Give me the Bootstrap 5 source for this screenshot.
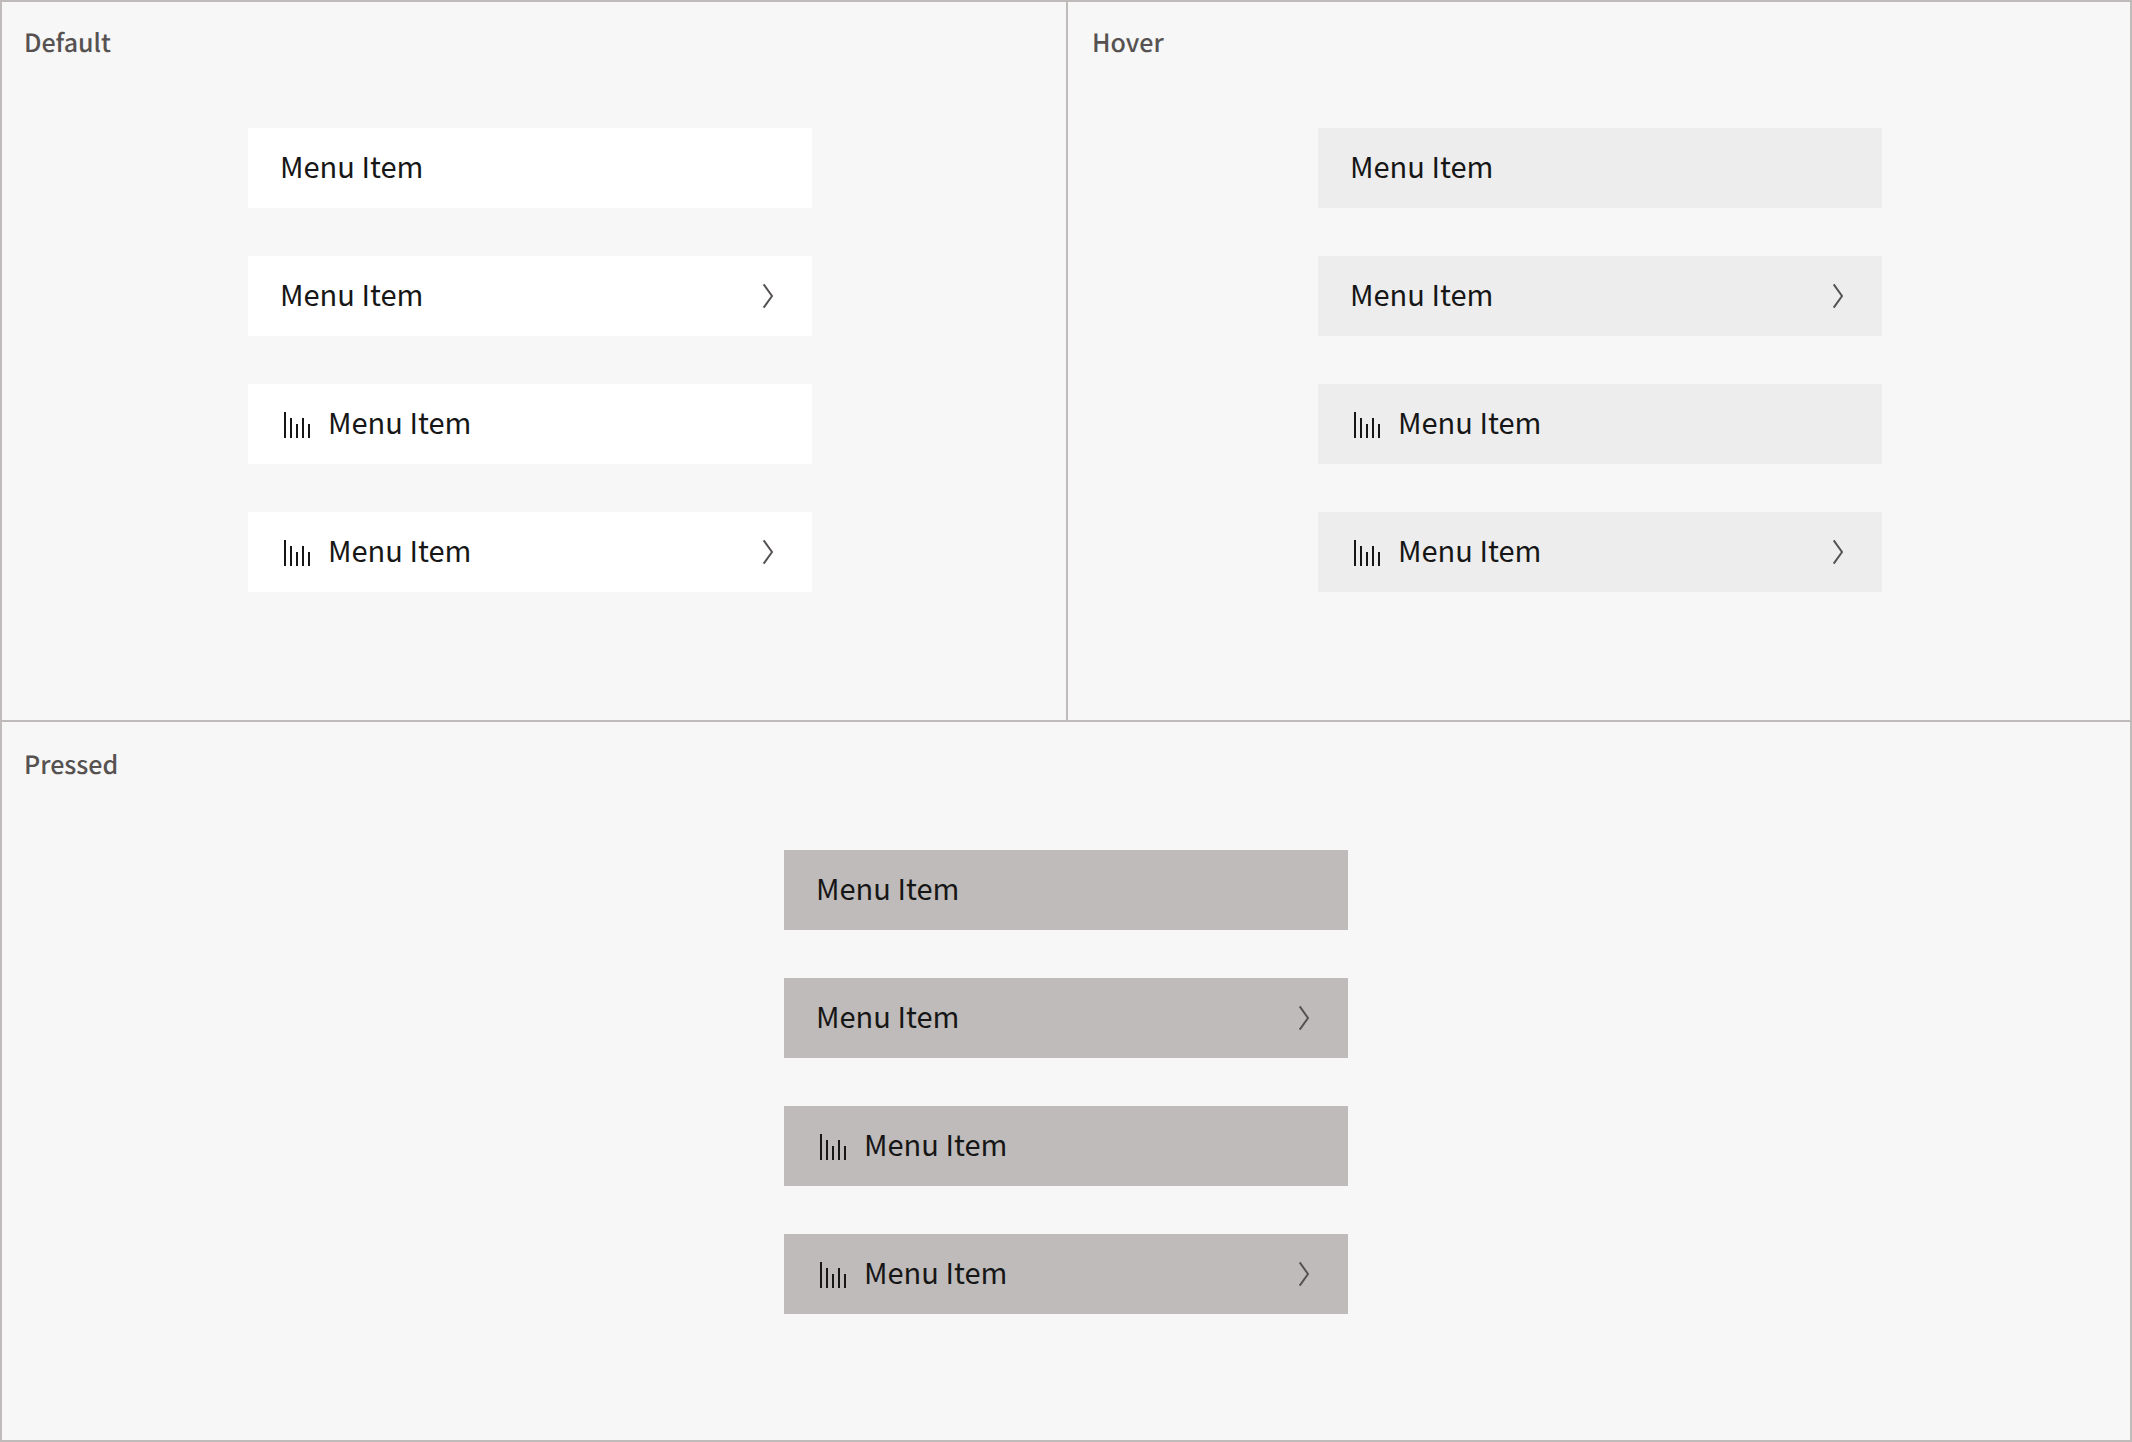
<!DOCTYPE html>
<html lang="en">
<head>
<meta charset="utf-8">
<meta name="viewport" content="width=device-width, initial-scale=1">
<title>Menu Item states</title>
<link href="https://cdn.jsdelivr.net/npm/bootstrap@5.3.0/dist/css/bootstrap.min.css" rel="stylesheet">
<style>
  :root { --line: #bfbbba; --label: #565251; --ink: #161616; }
  body { background: #f7f7f7; color: var(--ink); font-family: "Noto Sans CJK SC", "Noto Sans", sans-serif; text-rendering: geometricPrecision; }
  .board { border: 2px solid var(--line); }
  .board-half { flex: 1 1 0; }
  .board-half + .board-half { border-top: 2px solid var(--line); }
  .panel { padding: 20px 22px 48px; }
  .panel + .panel { border-left: 2px solid var(--line); padding-left: 24px; }
  .panel-wide { padding-top: 22px; }
  .panel-label { color: var(--label); font-size: 25px; line-height: 40px; font-weight: 500; margin-bottom: 66px; }
  .menu-stack { width: 564px; max-width: 100%; gap: 48px; }
  .menu-entry { height: 80px; padding: 0 32px; gap: 16px; border: 0; background: #fff; color: var(--ink); font-size: 29px; line-height: 40px; }
  .menu-entry span { padding-bottom: 6px; }
  .is-hover .menu-entry, .menu-entry:hover { background: #ededed; }
  .is-pressed .menu-entry, .menu-entry:active { background: #bfbbba; }
  .glyph { width: 32px; height: 32px; flex: none; }
  .chevron { fill: none; stroke: var(--label); stroke-width: 2; }
</style>
<script src="https://cdn.jsdelivr.net/npm/bootstrap@5.3.0/dist/js/bootstrap.bundle.min.js" defer></script>
</head>
<body>
<svg class="d-none" aria-hidden="true">
  <symbol id="bars" viewBox="0 0 32 32"><path fill="#161616" d="M4 4h2v26H4zM10 10h2v20h-2zM16 16h2v14h-2zM22 10h2v20h-2zM28 16h2v14h-2z"/></symbol>
  <symbol id="chevron" viewBox="0 0 32 32"><path d="M15.700 4.400 24 16l-8.300 11.600"/></symbol>
</svg>
<main class="board min-vh-100 d-flex flex-column">
  <div class="board-half d-flex">
    <section class="panel w-50">
      <h2 class="panel-label">Default</h2>
      <div class="pe-2">
        <div class="menu-stack d-flex flex-column mx-auto">
          <button type="button" class="menu-entry d-flex align-items-center text-start"><span>Menu Item</span></button>
          <button type="button" class="menu-entry d-flex align-items-center text-start"><span>Menu Item</span><svg class="glyph chevron ms-auto" aria-hidden="true"><use href="#chevron"/></svg></button>
          <button type="button" class="menu-entry d-flex align-items-center text-start"><svg class="glyph" aria-hidden="true"><use href="#bars"/></svg><span>Menu Item</span></button>
          <button type="button" class="menu-entry d-flex align-items-center text-start"><svg class="glyph" aria-hidden="true"><use href="#bars"/></svg><span>Menu Item</span><svg class="glyph chevron ms-auto" aria-hidden="true"><use href="#chevron"/></svg></button>
        </div>
      </div>
    </section>
    <section class="panel w-50 is-hover">
      <h2 class="panel-label">Hover</h2>
      <div class="menu-stack d-flex flex-column mx-auto">
        <button type="button" class="menu-entry d-flex align-items-center text-start"><span>Menu Item</span></button>
        <button type="button" class="menu-entry d-flex align-items-center text-start"><span>Menu Item</span><svg class="glyph chevron ms-auto" aria-hidden="true"><use href="#chevron"/></svg></button>
        <button type="button" class="menu-entry d-flex align-items-center text-start"><svg class="glyph" aria-hidden="true"><use href="#bars"/></svg><span>Menu Item</span></button>
        <button type="button" class="menu-entry d-flex align-items-center text-start"><svg class="glyph" aria-hidden="true"><use href="#bars"/></svg><span>Menu Item</span><svg class="glyph chevron ms-auto" aria-hidden="true"><use href="#chevron"/></svg></button>
      </div>
    </section>
  </div>
  <div class="board-half d-flex">
    <section class="panel panel-wide w-100 is-pressed">
      <h2 class="panel-label">Pressed</h2>
      <div class="menu-stack d-flex flex-column mx-auto">
        <button type="button" class="menu-entry d-flex align-items-center text-start"><span>Menu Item</span></button>
        <button type="button" class="menu-entry d-flex align-items-center text-start"><span>Menu Item</span><svg class="glyph chevron ms-auto" aria-hidden="true"><use href="#chevron"/></svg></button>
        <button type="button" class="menu-entry d-flex align-items-center text-start"><svg class="glyph" aria-hidden="true"><use href="#bars"/></svg><span>Menu Item</span></button>
        <button type="button" class="menu-entry d-flex align-items-center text-start"><svg class="glyph" aria-hidden="true"><use href="#bars"/></svg><span>Menu Item</span><svg class="glyph chevron ms-auto" aria-hidden="true"><use href="#chevron"/></svg></button>
      </div>
    </section>
  </div>
</main>
</body>
</html>
